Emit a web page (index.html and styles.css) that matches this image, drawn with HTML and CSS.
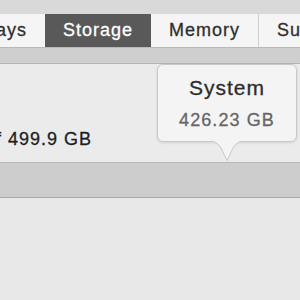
FILE: index.html
```html
<!DOCTYPE html>
<html lang="en">
<head>
  <meta charset="UTF-8" />
  <title>Storage</title>
  <link rel="stylesheet" href="styles.css">
</head>
<body>
  <div class="window-top"></div>

  <div class="tabs">
    <div class="tab tab-cut">Displays</div>
    <div class="tab active">Storage</div>
    <div class="tab">Memory</div>
    <div class="tab">Support</div>
  </div>

  <div class="strip"></div>

  <div class="panel">
    <div class="capacity">
      <span>499.9 GB available of 499.9 GB</span>
    </div>

    <div class="popover">
      <div class="popover-title">System</div>
      <div class="popover-size">426.23 GB</div>
      <svg class="popover-arrow" width="40" height="21" viewBox="0 0 40 21">
        <path d="M0 0.5 Q10 0.5 14 8 L20 20.5 L26 8 Q30 0.5 40 0.5" fill="#f4f4f4" stroke="#c8c8c8" stroke-width="1" />
        <rect x="0" y="0" width="40" height="1" fill="#f4f4f4" />
      </svg>
    </div>
  </div>

  <div class="usage-bar"></div>
</body>
</html>
```

FILE: styles.css
```css
body {
  margin: 0;
  padding: 0;
  background: #e8e8e8;
  font-family: "Liberation Sans", Arial, sans-serif;
  overflow: hidden;
}

.window-top {
  height: 14px;
  background: #d9d9d9;
}

.tabs {
  display: flex;
  height: 33px;
  background: #f5f5f5;
  border-bottom: 1px solid #b9b9b9;
  white-space: nowrap;
  overflow: hidden;
}

.tab {
  flex: none;
  display: flex;
  align-items: center;
  padding: 0 18px;
  font-size: 18px;
  letter-spacing: 1px;
  color: #2f2f2f;
  -webkit-text-stroke: 0.3px;
  border-left: 1px solid #d0d0d0;
}

/* first tab only shows its tail */
.tab-cut {
  width: 27px;
  justify-content: flex-end;
  padding-left: 0;
  border-left: none;
}

.tab.active {
  background: #595959;
  color: #fff;
  border-left: none;
}

.tab.active + .tab {
  border-left: none;
}

.strip {
  height: 15px;
  background: #cfcfcf;
  border-bottom: 1px solid #b4b4b4;
}

.panel {
  position: relative;
  height: 98px;
  background: #ebebeb;
  border-bottom: 1px solid #b8b8b8;
}

.capacity {
  display: flex;
  justify-content: flex-end;
  width: 92px;
  padding-top: 65px;
  white-space: nowrap;
  font-size: 18px;
  line-height: 21px;
  letter-spacing: 1px;
  color: #1e1e1e;
  -webkit-text-stroke: 0.3px;
}

.popover {
  position: absolute;
  top: 0;
  left: 157px;
  box-sizing: border-box;
  width: 140px;
  height: 78px;
  padding-top: 11px;
  background: #f4f4f4;
  border: 1px solid #c8c8c8;
  border-radius: 6px;
  box-shadow: 0 1px 3px rgba(0, 0, 0, 0.1);
  text-align: center;
}

.popover-title {
  font-size: 21px;
  line-height: 24px;
  letter-spacing: 1px;
  color: #2c2c2c;
  -webkit-text-stroke: 0.3px;
}

.popover-size {
  margin-top: 10px;
  font-size: 18px;
  line-height: 21px;
  letter-spacing: 1.1px;
  color: #666;
  -webkit-text-stroke: 0.3px;
}

.popover-arrow {
  position: absolute;
  left: 49px;
  top: 100%;
  margin-top: -1px;
  display: block;
}

.usage-bar {
  height: 34px;
  background: #cdcdcd;
  border-bottom: 1px solid #a9a9a9;
}
```
